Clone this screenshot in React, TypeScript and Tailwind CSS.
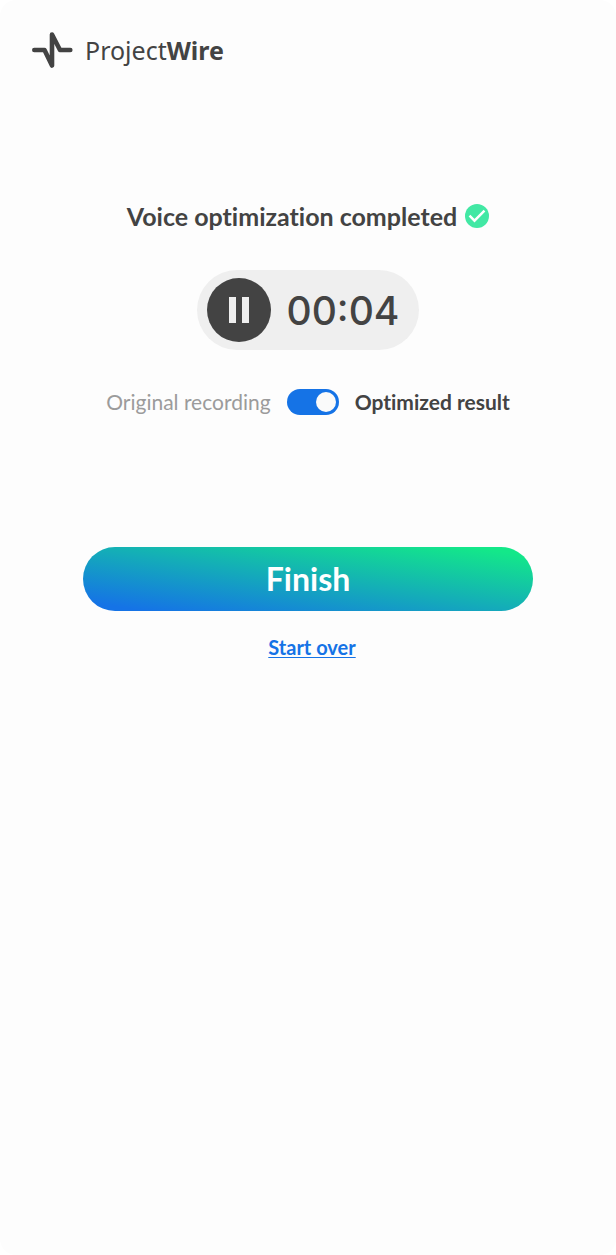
import { useState } from "react";

function Logo() {
  return (
    <a href="#" className="flex w-fit items-center gap-3 text-[#434343]">
      <svg width="41" height="36" viewBox="0 0 41 36" fill="none" aria-hidden="true">
        <path
          d="M2.3 18H12.5L20 33.5V2.5L28 18H38.3"
          stroke="currentColor"
          strokeWidth="4.6"
          strokeLinecap="round"
          strokeLinejoin="round"
        />
      </svg>
      <span className="font-['Noto_Sans',sans-serif] text-[25px] leading-9">
        <span className="font-normal">Project</span>
        <span className="font-bold">Wire</span>
      </span>
    </a>
  );
}

function CheckBadge() {
  return (
    <svg width="24" height="24" viewBox="0 0 24 24" fill="none" aria-hidden="true">
      <circle cx="12" cy="12" r="12" fill="#42e8a4" />
      <path d="M4.5 11.7L9.5 16.7L19.5 6.7" stroke="#ffffff" strokeWidth="2.4" />
    </svg>
  );
}

function Player() {
  const [playing, setPlaying] = useState(true);
  return (
    <div className="mt-10 flex h-20 items-center gap-4 rounded-full bg-[#efefef] pr-5 pl-[10px]">
      <button
        type="button"
        aria-label={playing ? "Pause" : "Play"}
        onClick={() => setPlaying(!playing)}
        className="flex size-16 items-center justify-center rounded-full bg-[#434343]"
      >
        <svg width="20" height="26" viewBox="0 0 20 26" fill="#efefef" aria-hidden="true">
          {playing ? <path d="M0 0H7V26H0ZM13 0H20V26H13Z" /> : <path d="M2 0L20 13L2 26Z" />}
        </svg>
      </button>
      <span className="font-['Inter',sans-serif] text-[39px] leading-none font-medium">00:04</span>
    </div>
  );
}

export default function App() {
  const [optimized, setOptimized] = useState(true);
  return (
    <div className="min-h-screen bg-white">
      <div className="min-h-screen rounded-2xl bg-[#fdfdfd] font-['Lato',sans-serif] text-[#434343] [font-variant-ligatures:no-common-ligatures]">
        <header className="p-8">
          <Logo />
        </header>
        <main className="flex flex-col items-center px-8 pt-[102px]">
          <div className="flex items-center gap-2">
            <h1 className="text-[25px] leading-7 font-bold">Voice optimization completed</h1>
            <CheckBadge />
          </div>
          <Player />
          <div className="mt-9 flex items-center gap-4 text-[21px] leading-8">
            <span className="text-[#9b9b9b]">Original recording</span>
            <input
              id="optimized"
              type="checkbox"
              role="switch"
              checked={optimized}
              onChange={(event) => setOptimized(event.target.checked)}
              className="h-[26px] w-[52px] cursor-pointer appearance-none rounded-full bg-[#9b9b9b] p-[3px] before:block before:size-5 before:rounded-full before:bg-[#fafafa] checked:bg-[#1573e6] checked:before:ml-auto"
            />
            <label htmlFor="optimized" className="font-bold">
              Optimized result
            </label>
          </div>
          <button
            type="button"
            className="mt-[129px] h-16 w-full max-w-[450px] rounded-full bg-[linear-gradient(to_top_right,#1573e6_7%,#13e889_93%)] text-[32px] font-bold text-white"
          >
            Finish
          </button>
          <a
            href="#"
            className="mt-6 pl-2 text-xl leading-6 font-bold text-[#1573e6] underline decoration-1 underline-offset-2"
          >
            Start over
          </a>
        </main>
      </div>
    </div>
  );
}
